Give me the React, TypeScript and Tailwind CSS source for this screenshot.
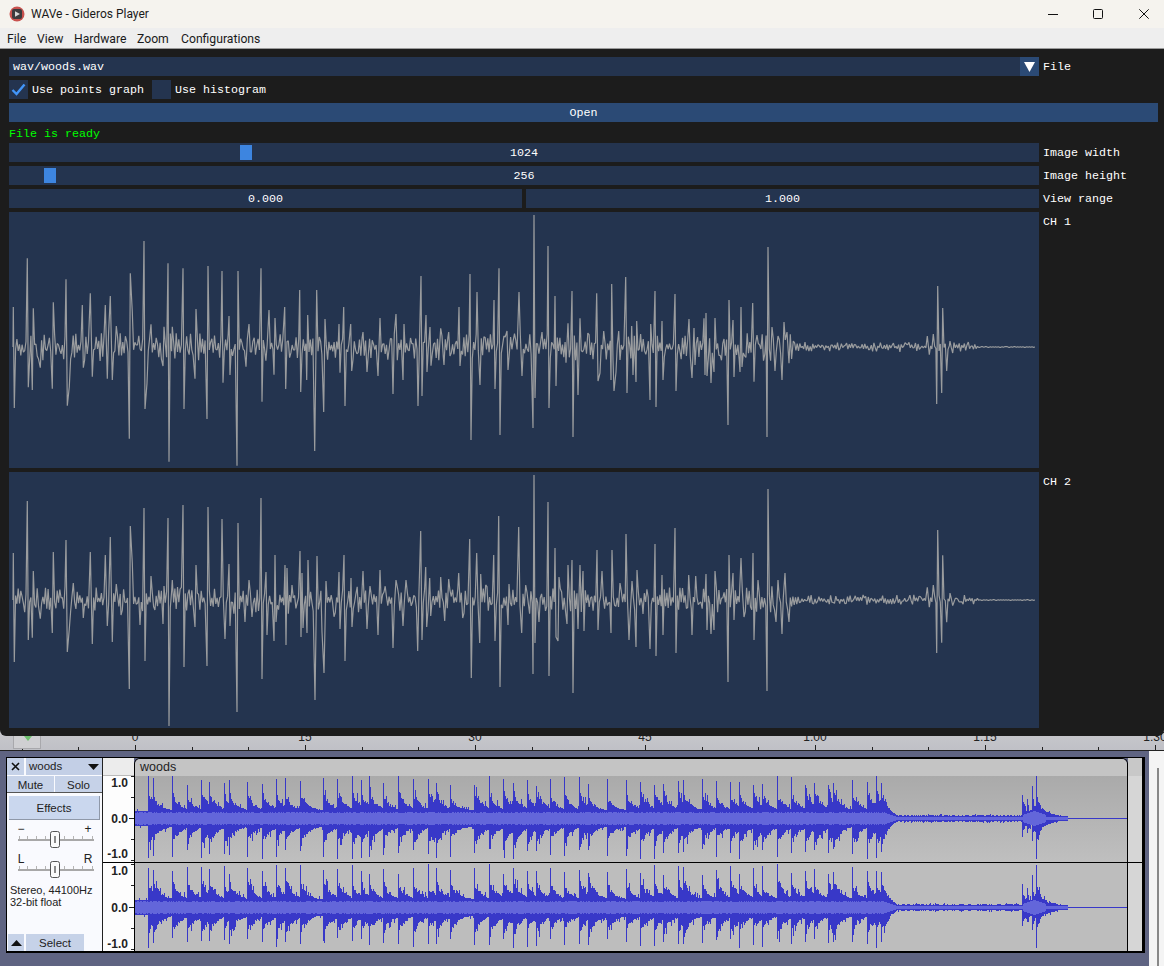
import React from 'react';

type Pt = [number, number];

const mulberry = (seed: number) => () => {
    seed |= 0;
    seed = (seed + 0x6d2b79f5) | 0;
    let t = Math.imul(seed ^ (seed >>> 15), 1 | seed);
    t = (t + Math.imul(t ^ (t >>> 7), 61 | t)) ^ t;
    return ((t ^ (t >>> 14)) >>> 0) / 4294967296;
};

// peaks read off the reference, [x, y] in crop pixels at 3x
const CH1_A: Pt[] = [[40,291],[82,145],[100,295],[160,277],[198,208],[247,285],[271,250],[316,285],[331,258],[349,348],[391,190],[397,306],[432,93],[453,343],[492,350],[504,160],[517,350],[549,175],[588,297],[624,168],[666,183],[687,318],[714,183],[747,342],[783,175],[807,300],[825,324],[43,594],[85,532],[97,540],[121,473],[157,536],[202,587],[208,530],[250,473],[277,500],[322,506],[337,510],[388,686],[435,597],[441,520],[489,468],[507,755],[552,597],[585,506],[621,627],[669,518],[690,495],[711,767],[738,470],[786,575],[822,494]];
const CH1_B: Pt[] = [[14,291],[59,240],[83,315],[110,240],[135,327],[177,342],[191,291],[212,342],[249,366],[300,324],[348,312],[372,342],[423,198],[438,315],[450,351],[482,355],[506,366],[537,291],[570,192],[591,246],[642,270],[657,175],[681,363],[717,246],[762,15],[786,366],[804,108],[825,258],[17,537],[62,546],[80,510],[104,723],[131,606],[180,488],[195,588],[215,483],[261,486],[294,498],[339,552],[369,510],[414,588],[426,558],[441,486],[453,467],[492,465],[540,468],[573,690],[600,525],[645,537],[660,675],[684,480],[726,498],[759,654],[765,564],[807,594],[828,528]];
const CH1_C: Pt[] = [[24,340],[36,243],[60,325],[110,250],[131,363],[155,222],[176,363],[197,201],[215,348],[230,333],[272,342],[285,243],[306,333],[345,252],[387,327],[402,354],[432,325],[438,309],[465,324],[492,387],[507,270],[519,330],[543,291],[578,279],[591,375],[624,111],[636,351],[654,378],[672,336],[681,366],[700,393],[18,458],[39,681],[54,555],[114,513],[120,489],[153,510],[162,543],[168,486],[201,549],[219,495],[228,516],[270,570],[288,591],[309,510],[348,543],[396,504],[405,465],[435,495],[441,498],[453,519],[462,486],[504,645],[522,501],[540,486],[546,471],[582,515],[621,681],[645,483],[666,510],[687,460]];
const BURST: Pt[] = [[262,378],[280,372],[293,228],[308,294],[330,393],[268,434],[290,582],[305,549],[320,483],[338,429]];
const CH2_A: Pt[] = [[40,249],[82,93],[100,303],[160,246],[198,210],[220,339],[271,246],[316,255],[331,201],[349,342],[391,168],[397,279],[432,114],[453,318],[492,348],[504,144],[517,330],[549,105],[588,285],[624,111],[666,147],[687,282],[714,159],[747,330],[783,84],[798,306],[825,255],[855,285],[861,294],[876,345],[900,243],[906,309],[924,270],[951,258],[978,333],[1017,306],[1032,255],[1053,324],[1089,303],[1110,348],[1140,300],[1188,330],[43,576],[85,510],[97,503],[121,446],[157,489],[202,546],[208,477],[250,444],[277,522],[322,468],[337,516],[363,435],[388,657],[420,465],[435,573],[489,462],[507,768],[552,591],[585,471],[621,588],[675,507],[690,468],[711,726],[735,456],[756,441],[786,627],[801,495],[822,513],[828,456],[858,525],[903,501],[909,474],[921,489],[945,690],[972,609],[966,486],[1002,440],[1020,477],[1035,573],[1056,471],[1101,477],[1134,495],[1179,534]];
const CH2_B: Pt[] = [[18,330],[62,183],[77,291],[89,324],[122,321],[146,327],[176,309],[209,207],[230,249],[242,312],[257,345],[281,255],[296,138],[327,342],[356,171],[377,345],[402,15],[444,96],[465,234],[477,321],[504,285],[516,270],[540,285],[549,303],[591,240],[606,303],[636,240],[660,339],[678,192],[696,333],[711,300],[765,222],[786,315],[825,174],[866,315],[887,318],[918,312],[945,303],[987,255],[999,309],[1023,264],[1059,249],[1074,330],[1104,57],[1134,330],[1155,309],[9,468],[53,543],[66,510],[80,471],[92,438],[134,453],[188,444],[214,624],[239,519],[285,513],[300,651],[324,465],[365,489],[399,612],[405,519],[417,456],[447,618],[468,501],[474,513],[501,462],[519,669],[534,477],[552,483],[594,480],[633,489],[687,510],[708,531],[729,432],[750,537],[768,558],[789,495],[828,549],[876,495],[921,480],[933,492],[942,480],[984,636],[1002,450],[1032,441],[1062,510],[1101,663],[1128,456],[1146,492],[1167,456]];

const toPlot = (x0: number, pts: Pt[]): Pt[] => pts.map(([x, y]) => [x0 + x / 3, y / 3 - 2]);

const noiseAmp = (x: number, r: number) => {
    if (x < 792) return 2 + r * r * 12;
    if (x < 800) return 2 + r * 3;
    if (x < 978) return 0.6 + r * r * 4.5;
    return 0.3;
};

function plotPath(keys: Pt[], center: number, seed: number) {
    const rnd = mulberry(seed);
    const sorted = [...keys, [13, center] as Pt, [1035, center] as Pt].sort((a, b) => a[0] - b[0]);
    let d = '';
    let sign = 1;
    sorted.forEach(([x, y], i) => {
        d += `${d ? 'L' : 'M'}${(x - 9).toFixed(1)} ${y.toFixed(1)}`;
        const next = sorted[i + 1];
        if (!next) return;
        for (let nx = x + 1.3; nx < next[0] - 0.7; nx += 1.3) {
            if (rnd() > 0.2) sign = -sign;
            const amp = noiseAmp(nx, rnd());
            d += `L${(nx - 9).toFixed(1)} ${(center + sign * amp).toFixed(1)}`;
        }
    });
    return d;
}

const CH1_PATH = plotPath(
    [
        ...toPlot(0, CH1_A).filter((p) => p[0] < 280),
        ...toPlot(280, CH1_B).filter((p) => p[0] < 560),
        ...toPlot(560, CH1_C),
        ...toPlot(840, BURST),
    ],
    135,
    7,
);
const CH2_PATH = plotPath(
    [
        ...toPlot(0, CH2_A),
        ...toPlot(400, CH2_B),
        ...toPlot(840, BURST).map(([x, y]): Pt => [x, 128 + (y - 135) * (y < 135 ? 1.15 : 0.93)]),
    ],
    128,
    21,
);

const ONSETS = [148,153,172,187,201,209,224,229,247,262,276,285,300,323,337,352,361,369,383,398,413,428,436,450,474,489,503,513,527,536,550,564,579,588,607,626,640,654,663,678,683,702,716,730,739,753,762,777,791,805,814,828,833,852,867,876,881];
const BURSTS: [number, number, number][] = [[1022,23,18],[1027,19,14],[1032,32,22],[1036,42,40]];

function buildWave(seed: number, center: number) {
    const rnd = mulberry(seed);
    const gains = ONSETS.map(() => 16 + rnd() * 11);
    const peaks = ONSETS.map(() => [32 + rnd() * 11, 30 + rnd() * 10]);
    let dark = '';
    let light = '';
    for (let X = 135; X < 1127; X++) {
        let body = 0;
        ONSETS.forEach((o, i) => {
            if (X >= o) body = Math.max(body, gains[i] * Math.exp(-(X - o) / 7.5));
        });
        let base = 7;
        let core = 5 + rnd();
        if (X >= 885) {
            const t = Math.min(1, (X - 885) / 12);
            base = 7 - t * (4 + rnd());
            core = 5 - t * 4;
            body = body * (1 - t);
        }
        if (X >= 1015) {
            let b = 0;
            BURSTS.forEach(([o, u]) => {
                if (X >= o) b = Math.max(b, u * 0.55 * Math.exp(-(X - o) / 6));
            });
            body = Math.max(body, b);
            if (X > 1022 && X < 1046) core = 2 + Math.max(0, 5 - Math.abs(X - 1034) / 3);
        }
        if (X >= 1058) {
            base = 2;
            core = 1;
        }
        let up = base + body * (0.6 + 0.4 * rnd());
        let down = base + body * (0.6 + 0.4 * rnd());
        if (rnd() > 0.88) up *= 1.3;
        if (rnd() > 0.88) down *= 1.3;
        const hit = ONSETS.indexOf(X);
        if (hit >= 0) {
            up = peaks[hit][0];
            down = peaks[hit][1];
        }
        BURSTS.forEach(([o, u, b]) => {
            if (X === o) {
                up = u;
                down = b;
            }
        });
        const px = X - 135 + 0.5;
        if (X >= 1068) {
            // the end of the clip is a single pixel line
            dark += `M${px} ${center}V${center + 1}`;
            continue;
        }
        dark += `M${px} ${Math.round(center - up)}V${Math.round(center + down) + 1}`;
        light += `M${px} ${Math.round(center - core)}V${Math.round(center + core) + 1}`;
    }
    return { dark, light };
}

const WAVE_1 = buildWave(3, 42);
const WAVE_2 = buildWave(11, 44);

const mono = "font-['Liberation_Mono',monospace] text-[11.67px] leading-[21px] text-white";

const Row = ({ label, children }: { label?: string; children: React.ReactNode }) => (
    <div className="flex h-[19px]">
        <div className="flex w-[1030px] gap-[4px]">{children}</div>
        {label && <span className={`${mono} ml-[4px]`}>{label}</span>}
    </div>
);

const Slider = ({ value, grabClass }: { value: string; grabClass: string }) => (
    <div className={`${mono} relative h-[19px] w-full bg-[#24344f] text-center`}>
        <div className={`absolute top-[2px] h-[15px] w-[12px] bg-[#3d85e0] ${grabClass}`} />
        {value}
    </div>
);

const Fader = ({ left, right }: { left: string; right: string }) => (
    <svg width="95" height="28" className="block">
        <rect x="11" y="18" width="76" height="2" fill="#a8a8a8" />
        {[12, 20, 29, 38, 47, 57, 66, 75, 85].map((x) => (
            <rect key={x} x={x} y="15" width="1" height="3" fill="#b4b4b4" />
        ))}
        <text x="14" y="12" textAnchor="middle" fontSize="12" fill="#222" fontFamily="Liberation Sans, sans-serif">{left}</text>
        <text x="81" y="12" textAnchor="middle" fontSize="12" fill="#222" fontFamily="Liberation Sans, sans-serif">{right}</text>
        <rect x="43.5" y="10.5" width="9" height="16" rx="2" fill="#fbfbfb" stroke="#555" />
        <rect x="47" y="15" width="2" height="7" fill="#8a8a8a" />
    </svg>
);

const TrackPanel = () => (
    <div className="flex h-[193px] w-[96px] shrink-0 flex-col border-r border-[#222] bg-[#f9fafe] font-['Liberation_Sans',sans-serif] text-[11.5px] text-[#222]">
        <div className="flex h-[17px] gap-[2px]">
            <div className="flex w-[17px] items-center justify-center bg-[#c6d2e8]">
                <svg width="9" height="9" viewBox="0 0 9 9"><path d="M1 1l7 7M8 1l-7 7" stroke="#111" strokeWidth="1.6" /></svg>
            </div>
            <div className="flex flex-1 items-center justify-between bg-[#c3cfe6] pl-[3px] pr-[3px]">
                woods
                <svg width="11" height="6" viewBox="0 0 11 6"><path d="M0 0h11L5.5 6z" fill="#111" /></svg>
            </div>
        </div>
        <div className="mt-[1px] flex h-[17px] gap-[1px] border-b border-[#555] text-center leading-[18px]">
            <div className="flex-1 bg-[#c6d2e8]">Mute</div>
            <div className="flex-1 bg-[#c6d2e8]">Solo</div>
        </div>
        <div className="mx-[2px] mt-[3px] h-[24px] shrink-0 border-b border-r border-[#8f98a8] bg-[#cad7ee] text-center leading-[25px]">Effects</div>
        <div className="mt-[1px]"><Fader left="−" right="+" /></div>
        <div className="mt-[2px]"><Fader left="L" right="R" /></div>
        <div className="ml-[3px] mt-[5px] text-[11px] leading-[12px]">
            <div>Stereo, 44100Hz</div>
            <div>32-bit float</div>
        </div>
        <div className="mt-auto flex h-[17px] gap-[2px] pl-[1px]">
            <div className="flex w-[16px] items-center justify-center bg-[#c6d2e8]">
                <svg width="11" height="6" viewBox="0 0 11 6"><path d="M0 6h11L5.5 0z" fill="#111" /></svg>
            </div>
            <div className="w-[58px] bg-[#c6d2e8] text-center leading-[19px]">Select</div>
        </div>
    </div>
);

const VRuler = () => (
    <svg width="31" height="193" className="block shrink-0">
        <rect width="31" height="193" fill="#fdfdfd" />
        <rect width="31" height="18" fill="#ececec" />
        <rect y="17" width="31" height="1" fill="#bbb" />
        <rect y="104" width="31" height="1" fill="#000" />
        {[
            ['1.0', 29],
            ['0.0', 65],
            ['-1.0', 100],
            ['1.0', 117],
            ['0.0', 154],
            ['-1.0', 190],
        ].map(([t, y]) => (
            <text key={`${t}${y}`} x="25" y={y} textAnchor="end" fontSize="12" fontWeight="700" fill="#222" fontFamily="Liberation Sans, sans-serif">{t}</text>
        ))}
        {[18, 39, 60, 81, 102, 106, 127, 149, 170, 191].map((y) => (
            <rect key={y} x={y === 60 || y === 149 ? 26 : 28} y={y} width={y === 60 || y === 149 ? 5 : 3} height="1" fill="#222" />
        ))}
    </svg>
);

const WaveSvg = ({ wave, h }: { wave: { dark: string; light: string }; h: number }) => (
    <svg width="992" height={h} className="block" shapeRendering="crispEdges">
        <path d={wave.dark} stroke="#3838c8" strokeWidth="1" fill="none" />
        <path d={wave.light} stroke="#6366da" strokeWidth="1" fill="none" />
    </svg>
);

const TimeRuler = () => {
    const ticks = Array.from({ length: 21 }, (_, i) => 21.67 + i * 56.67);
    const labels: [string, number][] = [['0', 135], ['15', 305], ['30', 475], ['45', 645], ['1:00', 815], ['1:15', 985], ['1:30', 1155]];
    return (
        <svg width="1164" height="23" className="block bg-linear-to-b from-[#c9c9cd] to-[#bfc0c6]">
            {ticks.map((x) => {
                const major = Math.abs((x - 135) % 170) < 1 || Math.abs((x - 135) % 170) > 169;
                return <rect key={x} x={Math.round(x)} y={major ? 17 : 19} width="1" height={major ? 5 : 3} fill="#222" />;
            })}
            {labels.map(([t, x]) => (
                <text key={t} x={x} y="13" textAnchor="middle" fontSize="12" fill="#222" fontFamily="Liberation Sans, sans-serif">{t}</text>
            ))}
            <rect x="13.5" y="0" width="27" height="20.5" fill="#cfcfd2" stroke="#a8a8ac" />
            <path d="M24 8h8l-4 5z" fill="#6fbf6f" />
            <rect y="22" width="1164" height="1" fill="#222" />
        </svg>
    );
};

const App = () => {
    return (
        <div className="flex h-[966px] w-[1164px] flex-col overflow-hidden bg-[#5f6482]">
            {/* window chrome */}
            <div className="flex h-[28px] shrink-0 items-center bg-[#f5f3ee] pl-[9px] pr-[15px] font-['Roboto',sans-serif] text-[12px] text-[#1a1a1a]">
                <svg width="16" height="16" viewBox="0 0 16 16" className="mr-[6px]">
                    <circle cx="8" cy="8" r="7.5" fill="#c9524f" />
                    <rect x="3" y="3" width="10" height="10" rx="2" fill="#3b3b3e" />
                    <path d="M6 5.2v5.6L11 8z" fill="#d8d8d8" />
                </svg>
                WAVe - Gideros Player
                <div className="ml-auto flex">
                    <svg width="10" height="10" viewBox="0 0 10 10"><path d="M0 5.5h10" stroke="#111" /></svg>
                    <svg width="10" height="10" viewBox="0 0 10 10" className="ml-[35px]"><rect x=".5" y=".5" width="9" height="9" rx="1" fill="none" stroke="#111" /></svg>
                    <svg width="10" height="10" viewBox="0 0 10 10" className="ml-[36px]"><path d="M.3.3l9.4 9.4M9.7.3L.3 9.7" stroke="#111" /></svg>
                </div>
            </div>
            <div className="flex h-[21px] shrink-0 items-center border-b border-[#9a9a9a] bg-[#eeeeee] pl-[7px] pt-[2px] font-['Roboto',sans-serif] text-[12.2px] text-[#1a1a1a]">
                <span className="w-[30px]">File</span>
                <span className="w-[37px]">View</span>
                <span className="w-[63px]">Hardware</span>
                <span className="w-[44px]">Zoom</span>
                <span>Configurations</span>
            </div>

            {/* WAVe ImGui window */}
            <div className="relative z-10 -mb-[8px] flex shrink-0 flex-col gap-[4px] rounded-b-md bg-[#1c1c1c] pb-[8px] pl-[9px] pr-[6px] pt-[8px]">
                <Row label="File">
                    <div className={`${mono} flex h-[19px] w-full justify-between bg-[#24344f] pl-[4px]`}>
                        wav/woods.wav
                        <div className="flex w-[19px] items-center justify-center bg-[#2b4a75]">
                            <svg width="11" height="10" viewBox="0 0 11 10"><path d="M0 0h11L5.5 10z" fill="#fff" /></svg>
                        </div>
                    </div>
                </Row>
                <div className={`${mono} flex h-[19px] items-start`}>
                    <div className="flex size-[19px] items-center justify-center bg-[#24344f]">
                        <svg width="15" height="13" viewBox="0 0 15 13"><path d="M1.5 7l4 4 8-9.5" fill="none" stroke="#4296fa" strokeWidth="2.4" /></svg>
                    </div>
                    <span className="ml-[4px] w-[120px]">Use points graph</span>
                    <div className="size-[19px] bg-[#24344f]" />
                    <span className="ml-[4px]">Use histogram</span>
                </div>
                <div className={`${mono} h-[19px] bg-[#2b4a75] text-center`}>Open</div>
                <div className="h-[13px] font-['Liberation_Mono',monospace] text-[11.67px] leading-[16px] text-[#00ff00]">File is ready</div>
                <Row label="Image width"><Slider value="1024" grabClass="left-[231px]" /></Row>
                <Row label="Image height"><Slider value="256" grabClass="left-[35px]" /></Row>
                <Row label="View range">
                    <div className={`${mono} flex-1 bg-[#24344f] text-center`}>0.000</div>
                    <div className={`${mono} flex-1 bg-[#24344f] text-center`}>1.000</div>
                </Row>
                <div className="flex">
                    <svg width="1030" height="256" className="block bg-[#24344f]">
                        <path d={CH1_PATH} fill="none" stroke="#9a9c9e" strokeWidth="1.2" strokeLinejoin="bevel" />
                    </svg>
                    <span className={`${mono} ml-[4px]`}>CH 1</span>
                </div>
                <div className="flex">
                    <svg width="1030" height="256" className="block bg-[#24344f]">
                        <path d={CH2_PATH} fill="none" stroke="#9a9c9e" strokeWidth="1.2" strokeLinejoin="bevel" />
                    </svg>
                    <span className={`${mono} ml-[4px]`}>CH 2</span>
                </div>
            </div>

            {/* Audacity behind it */}
            <TimeRuler />
            <div className="flex flex-1">
                <div className="ml-[6px] mt-[6px] flex h-[196px] w-[1139px] border-b-2 border-l border-r-[3px] border-t border-black">
                    <TrackPanel />
                    <VRuler />
                    <div className="flex h-[193px] w-[994px] shrink-0 flex-col overflow-hidden rounded-t-md border-x border-t border-black font-['Liberation_Sans',sans-serif]">
                        <div className="h-[17px] bg-[#c4c4c4] pl-[5px] text-[12.5px] leading-[17px] text-[#222]">woods</div>
                        <div className="h-[86px] bg-linear-to-b from-[#aaaaaa] to-[#bfbfbf]"><WaveSvg wave={WAVE_1} h={86} /></div>
                        <div className="h-px shrink-0 bg-black" />
                        <div className="h-[88px] bg-[#bdbdbd]"><WaveSvg wave={WAVE_2} h={88} /></div>
                    </div>
                    <div className="flex w-[15px] flex-col bg-[#d6d6d6]">
                        <div className="h-[18px] bg-[#c8c8c8]" />
                        <div className="mt-[86px] h-px bg-black" />
                    </div>
                </div>
                <div className="ml-[4px] w-[15px] bg-[#f4f4f4] pl-[8px] pt-[17px]">
                    <div className="h-full w-[2px] bg-[#888888]" />
                </div>
            </div>
        </div>
    );
};

export default App;
